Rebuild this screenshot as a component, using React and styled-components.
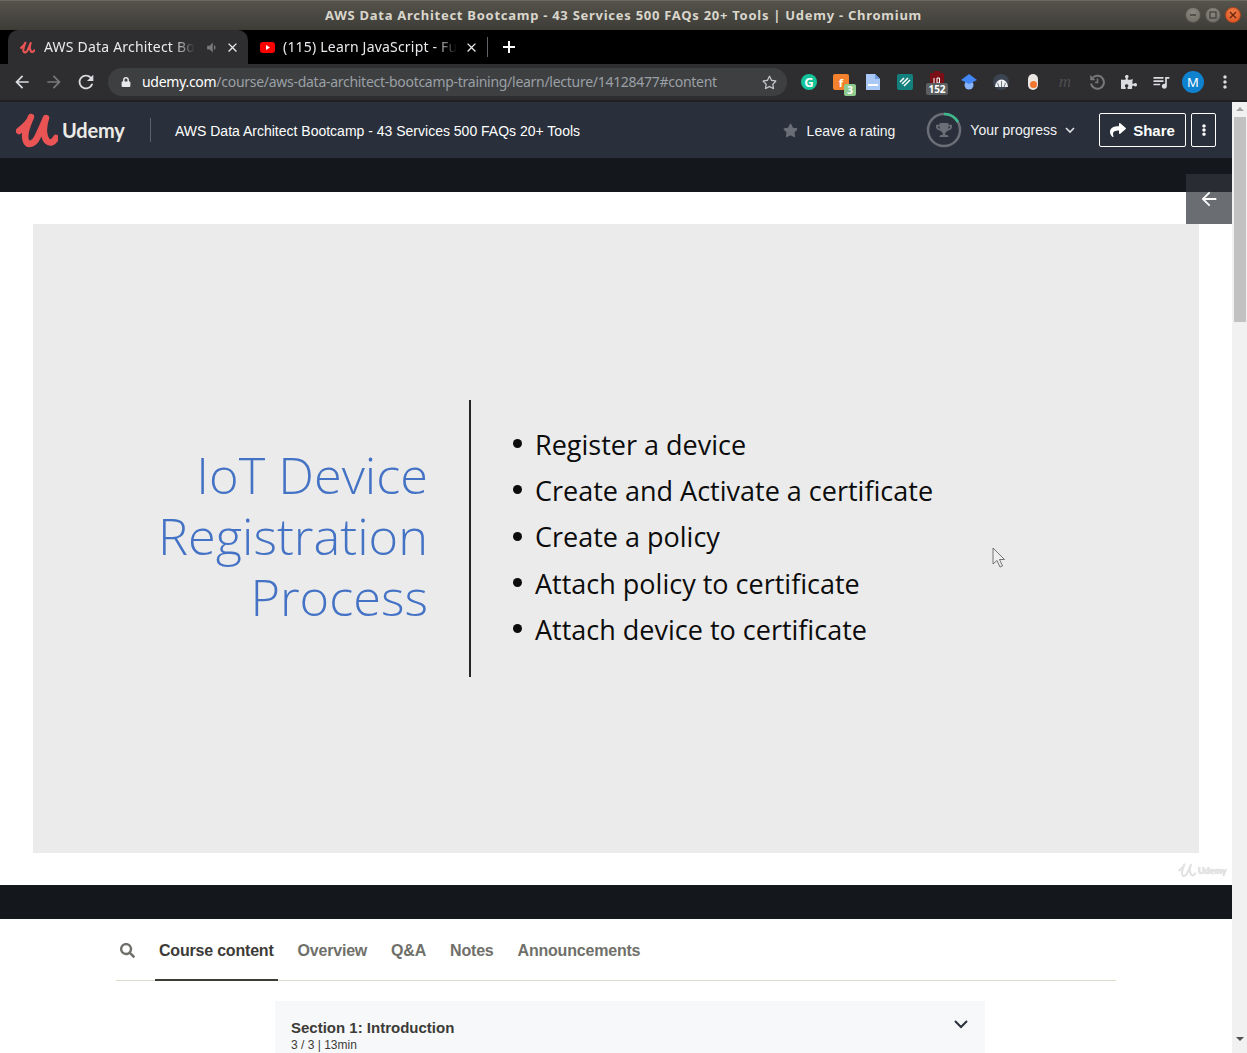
import React from "react";
import styled, { createGlobalStyle } from "styled-components";
import { FaStar, FaShare, FaEllipsisV, FaTrophy, FaSearch, FaPuzzlePiece, FaLock, FaRegStar } from "react-icons/fa";
import { MdQueueMusic, MdClose, MdArrowBack, MdArrowForward, MdRefresh, MdVolumeDown, MdMoreVert } from "react-icons/md";

const Global = createGlobalStyle`
  html, body { margin: 0; padding: 0; background: #000; overflow: hidden; }
  * { box-sizing: border-box; }
`;

const UI_FONT = `"Noto Sans", "Open Sans", sans-serif`;
const WEB_FONT = `"Liberation Sans", Arial, sans-serif`;
const SLIDE_FONT = `"Open Sans", Lato, sans-serif`;

const Shell = styled.div`
  width: 1247px; height: 1053px; overflow: hidden;
  display: flex; flex-direction: column; position: relative;
`;

/* window title bar */
const TitleBar = styled.div`
  height: 30px; flex: none;
  display: grid; grid-template-columns: 1fr auto 1fr; align-items: center;
  background: linear-gradient(#55534b, #3d3c37);
  border-top: 1px solid #6b695f;
  padding: 0 6px 2px 6px;
`;
const WinTitle = styled.div`
  grid-column: 2;
  font: 700 13px ${UI_FONT};
  letter-spacing: 0.73px;
  color: #d9d6cc;
  white-space: nowrap;
`;
const WinButtons = styled.div`
  grid-column: 3; justify-self: end;
  display: flex; gap: 4px;
`;
const WinButton = styled.div`
  width: 16px; height: 16px; border-radius: 50%;
  background: ${p => (p.$close ? "radial-gradient(circle at 50% 30%, #f07d4a, #d9521f)" : "radial-gradient(circle at 50% 30%, #8a887f, #6d6b63)")};
  border: 1px solid ${p => (p.$close ? "#b3461c" : "#55534c")};
  display: flex; align-items: center; justify-content: center;
  color: ${p => (p.$close ? "#6a2509" : "#3e3d38")};
`;

/* tabs */
const TabStrip = styled.div`
  height: 34px; flex: none; background: #000;
  display: flex; align-items: flex-end; padding-left: 8px;
`;
const Tab = styled.div`
  width: ${p => p.$w}px; height: 34px; flex: none;
  display: flex; align-items: center;
  padding: 0 8px 0 ${p => p.$pl}px;
  background: ${p => (p.$active ? "#2e2e30" : "transparent")};
  border-radius: 10px 10px 0 0;
  color: #e8eaed;
`;
const TabLabel = styled.div`
  flex: 1; min-width: 0; white-space: nowrap;
  margin: -2px 0 0 ${p => p.$ml}px;
  font: 400 14px ${UI_FONT};
  letter-spacing: 0.2px;
`;
const Faded = styled.span`
  display: inline-block;
  -webkit-mask-image: linear-gradient(to right, #000 calc(100% - 22px), transparent);
  mask-image: linear-gradient(to right, #000 calc(100% - 22px), transparent);
`;
const TabSep = styled.div`
  width: 1px; height: 20px; background: #5f6368; flex: none; margin: 0 15px 7px 0;
  align-self: flex-end;
`;
const NewTab = styled.div`
  color: #fff; display: flex; align-items: center; height: 34px;
`;

/* toolbar */
const Toolbar = styled.div`
  height: 38px; flex: none;
  background: #2e2e30;
  border-bottom: 2px solid #202022;
  display: flex; align-items: center;
  padding: 0 6px;
`;
const Slot = styled.div`
  width: 32px; height: 32px; flex: none; position: relative;
  display: flex; align-items: center; justify-content: center;
  color: ${p => p.$color || "#dadce0"};
`;
const Omnibox = styled.div`
  flex: 1; height: 28px; margin: 0 6px;
  background: #3e3f41; border-radius: 14px;
  display: flex; align-items: center;
  padding: 0 10px 0 13px;
  color: #e8eaed;
`;
const Url = styled.div`
  flex: 1; margin: -2px 0 0 11px;
  font: 400 14px ${UI_FONT};
  letter-spacing: -0.28px;
  white-space: nowrap;
  color: #fff;
  span { color: #9aa0a6; }
`;
const ExtDisc = styled.div`
  width: ${p => p.$size || 16}px; height: ${p => p.$size || 16}px; border-radius: 50%;
  background: ${p => p.$bg};
  color: #fff;
  display: flex; align-items: center; justify-content: center;
  font: ${p => p.$font || `700 13px ${UI_FONT}`};
`;
const ExtSquare = styled.div`
  width: 16px; height: 16px; border-radius: 2px;
  background: ${p => p.$bg};
  display: flex; align-items: center; justify-content: center;
  color: #fff; font: 700 11px ${UI_FONT};
`;
const ExtBadge = styled.div`
  position: absolute; right: ${p => p.$right}px; bottom: ${p => p.$bottom}px;
  min-width: ${p => p.$w}px; height: 12px; padding: 0 1px;
  border-radius: 2px;
  background: ${p => p.$bg};
  color: #fff; text-align: center;
  font: 700 10px/12px ${UI_FONT};
`;
const Pill = styled.div`
  width: 10px; height: 16px; border-radius: 5px; background: #e9e5e0;
  display: flex; justify-content: center; align-items: flex-end; padding-bottom: 2px;
  &::after { content: ""; width: 7px; height: 7px; border-radius: 50%; background: #f2762e; }
`;
const DimM = styled.span`
  font: italic 400 17px "Liberation Serif", serif; color: #4d4d4f;
`;

/* page */
const Page = styled.div`
  flex: 1; min-height: 0; display: flex; background: #fff;
`;
const Main = styled.div`
  width: 1232px; flex: none; position: relative; overflow: hidden;
`;
const CourseHeader = styled.header`
  height: 56px; background: #29303b; color: #fff;
  display: flex; align-items: center;
  padding: 0 16px;
  font: 400 14px ${WEB_FONT};
`;
const Brand = styled.div`
  display: flex; align-items: center; gap: 4px; width: 135px; height: 24px;
  border-right: 1px solid #5b626c;
`;
const BrandWord = styled.span`
  font: 700 20px Lato, sans-serif; color: #eceae6; letter-spacing: -0.2px;
`;
const CourseName = styled.div`
  margin: 1px 0 0 24px; flex: 1; white-space: nowrap;
`;
const Rating = styled.div`
  display: flex; align-items: center; gap: 9px; color: #f2f3f5; margin-top: 1px;
  svg { color: #6a6f77; }
`;
const Progress = styled.div`
  display: flex; align-items: center; margin-left: 31px; position: relative;
`;
const ProgressLabel = styled.div`
  margin-left: 8px; display: flex; align-items: center; gap: 8px; color: #f2f3f5;
`;
const TrophyWrap = styled.div`
  width: 36px; height: 36px; position: relative; display: flex; align-items: center; justify-content: center;
  color: #6a6f77;
  > svg:first-child { position: absolute; inset: 0; }
`;
const ShareButton = styled.button`
  margin-left: 24px; height: 34px; width: 87px;
  border: 1px solid #fff; border-radius: 2px; background: transparent; color: #fff;
  font: 700 15px ${WEB_FONT};
  display: flex; align-items: center; justify-content: center; gap: 7px; padding: 0;
`;
const KebabButton = styled.button`
  margin-left: 5px; height: 34px; width: 25px;
  border: 1px solid #fff; border-radius: 2px; background: transparent; color: #fff;
  display: flex; align-items: center; justify-content: center; padding: 0;
`;
const DarkStrip = styled.div`
  height: ${p => p.$h}px; background: #14171b;
`;
const Stage = styled.div`
  background: #fff; padding: 32px 33px;
`;
const Slide = styled.div`
  height: 629px; background: #ebebeb;
  display: flex; align-items: center;
`;
const SlideTitle = styled.div`
  width: 395px; flex: none; text-align: right; color: #4472c4;
  font: 300 50.5px/61px ${SLIDE_FONT};
  margin-top: -6px;
`;
const Rule = styled.div`
  width: 2px; height: 277px; background: #262626; flex: none; margin-left: 41px;
`;
const Bullets = styled.ul`
  list-style: none; margin: -2px 0 0 42px; padding: 0;
  color: #0c0c0c;
  font: 400 27px/46.1px ${SLIDE_FONT};
`;
const Bullet = styled.li`
  display: flex; align-items: center; white-space: nowrap;
  &::before {
    content: ""; width: 9px; height: 9px; border-radius: 50%; background: #0c0c0c;
    margin-right: 13px; margin-top: -3px; flex: none;
  }
`;
const BackPanel = styled.div`
  position: absolute; left: 1186px; top: 72px; width: 46px; height: 50px;
  background: rgba(50, 54, 60, 0.725); color: #fff;
  display: flex; align-items: center; justify-content: center;
`;
const Watermark = styled.div`
  position: absolute; left: 1178px; top: 760px;
  display: flex; align-items: center; gap: 2px;
  color: #e6e6e6; font: 700 9px Lato, sans-serif;
  text-shadow: 0 0 1px #bbb;
`;
const Pointer = styled.svg`
  position: absolute; left: 992px; top: 445px;
`;

/* lower tabs */
const TabsRow = styled.nav`
  margin: 0 116px; height: 62px;
  border-bottom: 1px solid #dcdacb;
  display: flex; align-items: stretch; gap: 16px;
  font: 700 16px ${WEB_FONT};
  letter-spacing: -0.2px;
  color: #686f7a;
`;
const SearchBox = styled.div`
  width: 23px; display: flex; align-items: center; justify-content: flex-end; color: #70706a;
  padding: 1px 4px 0 0;
`;
const NavTab = styled.div`
  padding: 4px 4px 0; display: flex; align-items: center;
  color: ${p => (p.$active ? "#3c3b37" : "#70706a")};
  border-bottom: 2px solid ${p => (p.$active ? "#3c3b37" : "transparent")};
  margin-bottom: -1px;
`;
const SectionCard = styled.section`
  margin: 20px 0 0 275px; width: 710px; height: 80px;
  background: #f7f8fa; padding: 18px 16px;
  display: flex; justify-content: space-between; align-items: flex-start;
`;
const SectionTitle = styled.div`
  font: 700 15px/18px ${WEB_FONT}; color: #3c3b37;
`;
const SectionMeta = styled.div`
  font: 400 12px/16px ${WEB_FONT}; color: #3c3b37;
`;
const Chev = styled.svg`
  flex: none;
`;

/* scrollbar */
const Scrollbar = styled.div`
  width: 15px; flex: none; background: #f1f1f1;
  display: flex; flex-direction: column; align-items: center;
`;
const Thumb = styled.div`
  width: 12px; height: 205px; margin-top: 6px; background: #c1c1c1; margin-left: 1px;
`;
const ScrollArrow = styled.div`
  width: 0; height: 0; margin-top: ${p => p.$mt}px;
  border-left: 4px solid transparent; border-right: 4px solid transparent;
  ${p => p.$down ? "border-top: 4px solid #505050;" : "border-bottom: 4px solid #a3a3a3;"}
`;

const LOGO_D = "M3 19 C8 15 14 9 15 5 C12 12 7 22 10 29 C12 34 18 32 21 26 C24 20 27 13 30 6 C27 14 27 24 31 29 C34 32 38 30 40 26";

const Logo = ({ w = 42, h = 36, color = "#ea5455", sw = 6.5 }) => (
  <svg width={w} height={h} viewBox="0 0 42 36" fill="none">
    <path d={LOGO_D} stroke={color} strokeWidth={sw} strokeLinecap="round" strokeLinejoin="round" />
  </svg>
);

const ChevronDown = ({ size = 10, stroke = "#dfe1e4", sw = 1.6 }) => (
  <svg width={size} height={size * 0.7} viewBox="0 0 10 7" fill="none">
    <path d="M1 1 L5 5 L9 1" stroke={stroke} strokeWidth={sw} />
  </svg>
);

const lessons = [
  "Register a device",
  "Create and Activate a certificate",
  "Create a policy",
  "Attach policy to certificate",
  "Attach device to certificate",
];

export default function App() {
  return (
    <Shell>
      <Global />
      <TitleBar>
        <WinTitle>AWS Data Architect Bootcamp - 43 Services 500 FAQs 20+ Tools | Udemy - Chromium</WinTitle>
        <WinButtons>
          <WinButton>
            <svg width="8" height="8" viewBox="0 0 8 8"><path d="M1 4h6" stroke="currentColor" strokeWidth="1.4" /></svg>
          </WinButton>
          <WinButton>
            <svg width="8" height="8" viewBox="0 0 8 8"><rect x="1" y="1" width="6" height="6" fill="none" stroke="currentColor" strokeWidth="1.2" /></svg>
          </WinButton>
          <WinButton $close>
            <svg width="8" height="8" viewBox="0 0 8 8"><path d="M1 1l6 6M7 1l-6 6" stroke="currentColor" strokeWidth="1.4" /></svg>
          </WinButton>
        </WinButtons>
      </TitleBar>

      <TabStrip>
        <Tab $active $w={240} $pl={12}>
          <Logo w={15} h={13} sw={6} />
          <TabLabel $ml={9}><Faded>AWS Data Architect Bo</Faded></TabLabel>
          <MdVolumeDown size={15} color="#77787a" style={{ margin: "0 6px 0 4px" }} />
          <MdClose size={15} />
        </Tab>
        <Tab $w={239} $pl={12}>
          <svg width="15" height="11" viewBox="0 0 15 11">
            <rect width="15" height="11" rx="3" fill="#f00" />
            <path d="M6 3 L10 5.5 L6 8z" fill="#fff" />
          </svg>
          <TabLabel $ml={8}><Faded>(115) Learn JavaScript - Fu</Faded></TabLabel>
          <MdClose size={15} style={{ marginLeft: 5 }} />
        </Tab>
        <TabSep />
        <NewTab>
          <svg width="12" height="12" viewBox="0 0 12 12"><path d="M6 0v12M0 6h12" stroke="#fff" strokeWidth="2" /></svg>
        </NewTab>
      </TabStrip>

      <Toolbar>
        <Slot><MdArrowBack size={20} /></Slot>
        <Slot $color="#77787a"><MdArrowForward size={20} /></Slot>
        <Slot><MdRefresh size={22} /></Slot>
        <Omnibox>
          <FaLock size={10} />
          <Url>udemy.com<span>/course/aws-data-architect-bootcamp-training/learn/lecture/14128477#content</span></Url>
          <FaRegStar size={15} color="#c4c7ca" />
        </Omnibox>
        <Slot><ExtDisc $bg="#15c39a">G</ExtDisc></Slot>
        <Slot>
          <ExtSquare $bg="#f4812d">f</ExtSquare>
          <ExtBadge $bg="#8fcb8e" $w={12} $right={1} $bottom={2}>3</ExtBadge>
        </Slot>
        <Slot>
          <svg width="14" height="16" viewBox="0 0 14 16">
            <path d="M0 0h9l5 5v11H0z" fill="#a9c8f5" />
            <path d="M9 0l5 5H9z" fill="#6d9ee6" />
            <rect x="2" y="10" width="10" height="2" fill="#fff" />
          </svg>
        </Slot>
        <Slot>
          <ExtSquare $bg="#13807d">
            <svg width="12" height="10" viewBox="0 0 12 10" fill="none" stroke="#fff" strokeWidth="1.5">
              <path d="M1 5l4-4M3 7l6-6M5 9l6-6" />
            </svg>
          </ExtSquare>
        </Slot>
        <Slot>
          <svg width="14" height="16" viewBox="0 0 14 16" style={{ marginTop: -7 }}>
            <rect y="2" width="14" height="14" rx="1" fill="#7a0f16" />
            <rect x="4" width="6" height="3" fill="#7a0f16" />
            <path d="M4 7v5M7 7v5M7 7h2.500v5H7" stroke="#fff" strokeWidth="1" fill="none" />
          </svg>
          <ExtBadge $bg="#5c5e60" $w={22} $right={5} $bottom={3}>152</ExtBadge>
        </Slot>
        <Slot>
          <svg width="16" height="16" viewBox="0 0 16 16">
            <circle cx="8" cy="11" r="4.500" fill="#8ab4f8" />
            <path d="M0 6 L8 0 L16 6 L8 10z" fill="#4285f4" />
          </svg>
        </Slot>
        <Slot>
          <ExtDisc $bg="#3b4450">
            <svg width="13" height="9" viewBox="0 0 13 9">
              <path d="M0 9 A6.500 7.500 0 0 1 13 9z" fill="#eef0f2" />
              <path d="M6.500 9V3M4 9L2.500 5M9 9L10.500 5" stroke="#3b4450" strokeWidth="0.7" />
            </svg>
          </ExtDisc>
        </Slot>
        <Slot><Pill /></Slot>
        <Slot><DimM>m</DimM></Slot>
        <Slot $color="#77787a">
          <svg width="16" height="16" viewBox="0 0 16 16" fill="none" stroke="currentColor" strokeWidth="2">
            <path d="M4 3.500 A6.500 6.500 0 1 1 2 9.500" />
            <path d="M1.500 1.500 L1.500 6 L6 6 Z" fill="currentColor" strokeWidth="0.500" />
            <path d="M8.500 4.500 V8.500 H6" strokeWidth="1.600" />
          </svg>
        </Slot>
        <Slot><FaPuzzlePiece size={16} /></Slot>
        <Slot><MdQueueMusic size={20} /></Slot>
        <Slot><ExtDisc $bg="#0f82cf" $size={22} $font={`400 13px ${UI_FONT}`}>M</ExtDisc></Slot>
        <Slot><MdMoreVert size={20} /></Slot>
      </Toolbar>

      <Page>
        <Main>
          <CourseHeader>
            <Brand>
              <Logo />
              <BrandWord>Udemy</BrandWord>
            </Brand>
            <CourseName>AWS Data Architect Bootcamp - 43 Services 500 FAQs 20+ Tools</CourseName>
            <Rating>
              <FaStar size={15} />
              <span>Leave a rating</span>
            </Rating>
            <Progress>
              <TrophyWrap>
                <svg width="36" height="36" viewBox="0 0 36 36" fill="none">
                  <circle cx="18" cy="18" r="16" stroke="#6a6f77" strokeWidth="2.500" />
                  <path d="M18 2 A16 16 0 0 1 32 10" stroke="#3bb98b" strokeWidth="2.500" />
                </svg>
                <FaTrophy size={16} />
              </TrophyWrap>
              <ProgressLabel>
                <span>Your progress</span>
                <ChevronDown />
              </ProgressLabel>
            </Progress>
            <ShareButton><FaShare size={16} />Share</ShareButton>
            <KebabButton><FaEllipsisV size={12} /></KebabButton>
          </CourseHeader>
          <DarkStrip $h={34} />
          <Stage>
            <Slide>
              <SlideTitle>IoT Device<br />Registration<br />Process</SlideTitle>
              <Rule />
              <Bullets>
                {lessons.map(l => <Bullet key={l}>{l}</Bullet>)}
              </Bullets>
            </Slide>
          </Stage>
          <DarkStrip $h={34} />
          <TabsRow>
            <SearchBox><FaSearch size={15} /></SearchBox>
            <NavTab $active>Course content</NavTab>
            <NavTab>Overview</NavTab>
            <NavTab>Q&amp;A</NavTab>
            <NavTab>Notes</NavTab>
            <NavTab>Announcements</NavTab>
          </TabsRow>
          <SectionCard>
            <div>
              <SectionTitle>Section 1: Introduction</SectionTitle>
              <SectionMeta>3 / 3 | 13min</SectionMeta>
            </div>
            <Chev width="16" height="11" viewBox="0 0 16 11" fill="none">
              <path d="M2 2 L8 8 L14 2" stroke="#29303b" strokeWidth="2" />
            </Chev>
          </SectionCard>
          <BackPanel>
            <MdArrowBack size={22} />
          </BackPanel>
          <Watermark>
            <Logo w={18} h={16} color="#e2e2e2" sw={5} />
            <span>Udemy</span>
          </Watermark>
          <Pointer width="14" height="22" viewBox="0 0 14 22">
            <path d="M1 1 L1 17 L5 13.500 L8 20 L10.500 19 L7.500 12.500 L12.500 12.500 Z" fill="#eeeeee" stroke="#555" strokeWidth="0.8" />
          </Pointer>
        </Main>
        <Scrollbar>
          <ScrollArrow $mt={5} />
          <Thumb />
          <ScrollArrow $down $mt={715} />
        </Scrollbar>
      </Page>
    </Shell>
  );
}
